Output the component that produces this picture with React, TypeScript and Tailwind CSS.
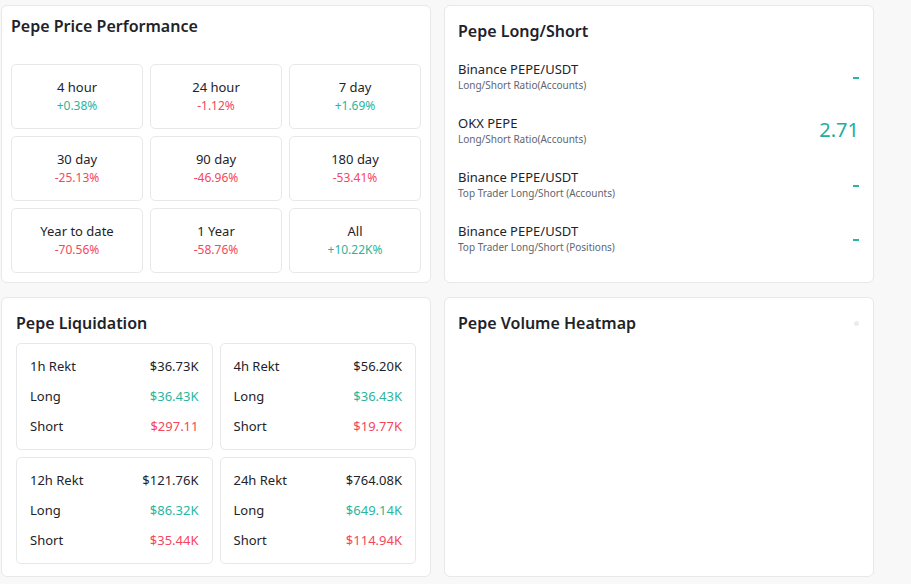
const FONT = "font-['Noto_Sans','Liberation_Sans',sans-serif]";

const perf = [
  { label: "4 hour", value: "+0.38%", up: true },
  { label: "24 hour", value: "-1.12%", up: false },
  { label: "7 day", value: "+1.69%", up: true },
  { label: "30 day", value: "-25.13%", up: false },
  { label: "90 day", value: "-46.96%", up: false },
  { label: "180 day", value: "-53.41%", up: false },
  { label: "Year to date", value: "-70.56%", up: false },
  { label: "1 Year", value: "-58.76%", up: false },
  { label: "All", value: "+10.22K%", up: true },
];

const ratios = [
  { name: "Binance PEPE/USDT", sub: "Long/Short Ratio(Accounts)", value: "-" },
  { name: "OKX PEPE", sub: "Long/Short Ratio(Accounts)", value: "2.71" },
  { name: "Binance PEPE/USDT", sub: "Top Trader Long/Short (Accounts)", value: "-" },
  { name: "Binance PEPE/USDT", sub: "Top Trader Long/Short (Positions)", value: "-" },
];

const rekt = [
  { label: "1h Rekt", total: "$36.73K", long: "$36.43K", short: "$297.11" },
  { label: "4h Rekt", total: "$56.20K", long: "$36.43K", short: "$19.77K" },
  { label: "12h Rekt", total: "$121.76K", long: "$86.32K", short: "$35.44K" },
  { label: "24h Rekt", total: "$764.08K", long: "$649.14K", short: "$114.94K" },
];

function Card({ children, className = "" }: { children: React.ReactNode; className?: string }) {
  return (
    <div className={`w-[430px] rounded-md border border-[#e6e8ea] bg-white ${className}`}>
      {children}
    </div>
  );
}

export default function App() {
  return (
    <div className={`${FONT} min-h-[584px] w-[911px] bg-[#f8f8f8] pl-[1px] pt-[5px] text-[#1e2329]`}>
      <div className="flex gap-[13px]">
        {/* Price performance */}
        <Card className="h-[278px] px-[9px] pt-[8px]">
          <h2 className="text-[16px] font-semibold leading-[24px] text-[#1e2329]">Pepe Price Performance</h2>
          <div className="mt-[26px] grid grid-cols-3 gap-x-[7px] gap-y-[7px]">
            {perf.map((p) => (
              <div
                key={p.label}
                className="flex h-[65px] flex-col items-center justify-center rounded-[5px] border border-[#e6e8ea]"
              >
                <span className="text-[13px] leading-[18px] text-[#1e2329]">{p.label}</span>
                <span className={`text-[12px] leading-[19px] ${p.up ? "text-[#2bb59d]" : "text-[#f6465d]"}`}>
                  {p.value}
                </span>
              </div>
            ))}
          </div>
        </Card>

        {/* Long / Short */}
        <Card className="h-[278px] px-[13px] pt-[13px]">
          <h2 className="text-[16px] font-semibold leading-[24px]">Pepe Long/Short</h2>
          <div className="mt-[10px] flex flex-col">
            {ratios.map((r, i) => (
              <div key={i} className="flex h-[54px] items-center justify-between pb-[8px]">
                <div className="flex flex-col">
                  <span className="text-[13px] leading-[18px]">{r.name}</span>
                  <span className="text-[10px] leading-[14px] text-[#5e6673]">{r.sub}</span>
                </div>
                {r.value === "-" ? (
                  <span className="mr-[1px] mt-[4px] h-[1.5px] w-[6px] bg-[#2bb59d]" />
                ) : (
                  <span className="pr-[1px] text-[20px] leading-[24px] text-[#22ad9c]">{r.value}</span>
                )}
              </div>
            ))}
          </div>
        </Card>
      </div>

      <div className="mt-[14px] flex gap-[13px]">
        {/* Liquidation */}
        <Card className="h-[280px] px-[14px] pt-[13px]">
          <h2 className="text-[16px] font-semibold leading-[24px]">Pepe Liquidation</h2>
          <div className="mt-[8px] grid grid-cols-2 gap-[7px]">
            {rekt.map((r) => (
              <div key={r.label} className="flex h-[107px] flex-col gap-[10px] rounded-[5px] border border-[#e6e8ea] px-[13px] pt-[12px]">
                <div className="flex justify-between text-[13px] leading-[20px]">
                  <span>{r.label}</span>
                  <span>{r.total}</span>
                </div>
                <div className="flex justify-between text-[13px] leading-[20px]">
                  <span>Long</span>
                  <span className="text-[#2bb59d]">{r.long}</span>
                </div>
                <div className="flex justify-between text-[13px] leading-[20px]">
                  <span>Short</span>
                  <span className="text-[#f6465d]">{r.short}</span>
                </div>
              </div>
            ))}
          </div>
        </Card>

        {/* Heatmap */}
        <Card className="h-[280px] px-[13px] pt-[13px]">
          <div className="flex items-center justify-between">
            <h2 className="text-[16px] font-semibold leading-[24px]">Pepe Volume Heatmap</h2>
            <span className="mr-[1px] h-[5px] w-[5px] rounded-full bg-[#eaecef]" />
          </div>
        </Card>
      </div>
    </div>
  );
}
